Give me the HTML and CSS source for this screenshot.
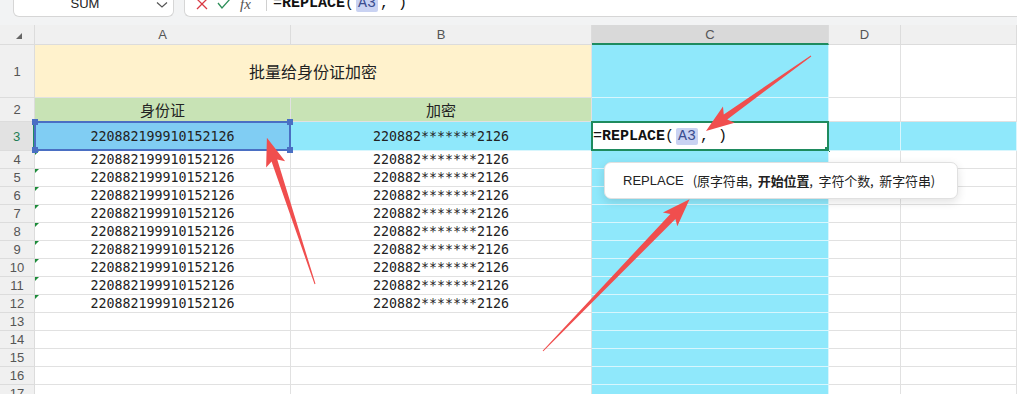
FILE: index.html
```html
<!DOCTYPE html>
<html lang="zh-CN">
<head>
    <meta charset="UTF-8">
    <title>批量给身份证加密</title>
    <link rel="stylesheet" href="styles.css">
</head>
<body>
    <div class="topbar">
        <div class="namebox">
            <span class="name">SUM</span>
            <svg class="chev" width="12" height="8" viewBox="0 0 12 8"><polyline points="1,1.5 6,6 11,1.5" fill="none" stroke="#555" stroke-width="1.2"/></svg>
        </div>
        <div class="fxbox">
            <svg class="ico" width="12" height="10" viewBox="0 0 12 10"><path d="M1,-1 L11,9 M11,-1 L1,9" stroke="#d93a44" stroke-width="1.3"/></svg>
            <svg class="ico" width="14" height="10" viewBox="0 0 14 10"><polyline points="1,3 5,8 13,-1" fill="none" stroke="#2f8f5a" stroke-width="1.3"/></svg>
            <i class="fx">fx</i>
            <span class="sep"></span>
            <span class="formula">=<b>REPLACE</b>(<span class="ref">A3</span>, )</span>
        </div>
    </div>

    <div class="sheet">
        <!-- 列头 -->
        <div class="c corner"></div>
        <div class="c ch">A</div>
        <div class="c ch">B</div>
        <div class="c ch on">C</div>
        <div class="c ch">D</div>
        <div class="c ch"></div>

        <div class="c rh">1</div>
        <div class="c title">批量给身份证加密</div>
        <div class="c cy"></div><div class="c"></div><div class="c"></div>

        <div class="c rh">2</div>
        <div class="c hd">身份证</div>
        <div class="c hd">加密</div>
        <div class="c cy"></div><div class="c"></div><div class="c"></div>

        <div class="c rh on">3</div>
        <div class="c num sel">220882199910152126
            <span class="hdl tl"></span><span class="hdl tr"></span><span class="hdl bl"></span><span class="hdl br"></span>
        </div>
        <div class="c num cy">220882*******2126</div>
        <div class="c edit"><span class="formula">=<b>REPLACE</b>(<span class="ref">A3</span>, )</span></div>
        <div class="c cy"></div><div class="c cy"></div>

        <div class="c rh">4</div><div class="c num err">220882199910152126</div><div class="c num">220882*******2126</div><div class="c cy"></div><div class="c"></div><div class="c"></div>
        <div class="c rh">5</div><div class="c num err">220882199910152126</div><div class="c num">220882*******2126</div><div class="c cy"></div><div class="c"></div><div class="c"></div>
        <div class="c rh">6</div><div class="c num err">220882199910152126</div><div class="c num">220882*******2126</div><div class="c cy"></div><div class="c"></div><div class="c"></div>
        <div class="c rh">7</div><div class="c num err">220882199910152126</div><div class="c num">220882*******2126</div><div class="c cy"></div><div class="c"></div><div class="c"></div>
        <div class="c rh">8</div><div class="c num err">220882199910152126</div><div class="c num">220882*******2126</div><div class="c cy"></div><div class="c"></div><div class="c"></div>
        <div class="c rh">9</div><div class="c num err">220882199910152126</div><div class="c num">220882*******2126</div><div class="c cy"></div><div class="c"></div><div class="c"></div>
        <div class="c rh">10</div><div class="c num err">220882199910152126</div><div class="c num">220882*******2126</div><div class="c cy"></div><div class="c"></div><div class="c"></div>
        <div class="c rh">11</div><div class="c num err">220882199910152126</div><div class="c num">220882*******2126</div><div class="c cy"></div><div class="c"></div><div class="c"></div>
        <div class="c rh">12</div><div class="c num err">220882199910152126</div><div class="c num">220882*******2126</div><div class="c cy"></div><div class="c"></div><div class="c"></div>
        <div class="c rh">13</div><div class="c"></div><div class="c"></div><div class="c cy"></div><div class="c"></div><div class="c"></div>
        <div class="c rh">14</div><div class="c"></div><div class="c"></div><div class="c cy"></div><div class="c"></div><div class="c"></div>
        <div class="c rh">15</div><div class="c"></div><div class="c"></div><div class="c cy"></div><div class="c"></div><div class="c"></div>
        <div class="c rh">16</div><div class="c"></div><div class="c"></div><div class="c cy"></div><div class="c"></div><div class="c"></div>
        <div class="c rh">17</div><div class="c"></div><div class="c"></div><div class="c cy"></div><div class="c"></div><div class="c"></div>
    </div>

    <!-- 函数提示 -->
    <div class="tip">
        <span class="fn">REPLACE</span><span class="args">(原字符串,&nbsp; <b>开始位置</b>,&nbsp; 字符个数,&nbsp; 新字符串)</span>
    </div>

    <!-- 红色箭头 -->
    <svg class="arrows" width="1017" height="394" viewBox="0 0 1017 394">
        <g transform="translate(315,284) rotate(-108.2)">
            <polygon points="0,-0.5 130,-3 126,-10 154,0 126,10 130,3 0,0.5"/>
        </g>
        <g transform="translate(811,56) rotate(144.5)">
            <polygon points="0,-0.5 105,-3 101,-10 129,0 101,10 105,3 0,0.5"/>
        </g>
        <g transform="translate(543,351) rotate(-46)">
            <polygon points="0,-0.5 187,-3.5 183,-10 211,0 183,10 187,3.5 0,0.5"/>
        </g>
    </svg>
</body>
</html>
```

FILE: styles.css
```css
body{
    margin:0;
    width:1017px;
    height:394px;
    overflow:hidden;
    background:#fff;
    font-family:"Liberation Sans","Noto Sans CJK SC",sans-serif;
    position:relative;
}

/* 顶部名称框和编辑栏 */
.topbar{
    height:25px;
    background:#f2f3f4;
    display:flex;
    align-items:flex-start;
    padding-left:13px;
    box-sizing:border-box;
}
.namebox{
    width:161px;
    height:17px;
    box-sizing:border-box;
    background:#fff;
    border:1px solid #d6d6d6;
    border-top:none;
    border-radius:0 0 6px 6px;
    display:flex;
    align-items:flex-start;
}
.name{
    flex:1;
    text-align:center;
    font-size:13px;
    line-height:10px;
    margin-top:-1px;
    color:#222;
}
.chev{margin:1px 5px 0 0}
.fxbox{
    flex:1;
    margin-left:10px;
    height:17px;
    box-sizing:border-box;
    background:#fff;
    border:1px solid #d6d6d6;
    border-top:none;
    border-right:none;
    border-radius:0 0 0 6px;
    display:flex;
    align-items:flex-start;
    padding-left:11px;
}
.ico{margin-right:9px}
.fx{
    font-family:"Liberation Serif",serif;
    font-size:15px;
    line-height:10px;
    color:#555;
    margin-top:-1px;
    width:20px;
}
.sep{
    width:1px;
    height:11px;
    background:#d0d0d0;
    margin:0 6px 0 6px;
}
.fxbox .formula{margin-top:-2px;line-height:12px}

.formula{
    font-family:"Liberation Mono",monospace;
    font-size:15px;
    color:#111;
    white-space:pre;
}
.formula b{font-weight:bold}
.ref{
    background:#c9d2f2;
    color:#3b4c8f;
    padding:0 2px;
    border-radius:2px;
    margin:0 2px;
}

/* 表格 */
.sheet{
    display:grid;
    grid-template-columns:35px 256px 301px 237px 72px 1fr;
    grid-template-rows:20px 53px 24px 29px repeat(14,18px);
}
.c{
    border-right:1px solid #e1e1e1;
    border-bottom:1px solid #e1e1e1;
    box-sizing:border-box;
    display:flex;
    align-items:center;
    justify-content:center;
    position:relative;
    color:#222;
}
.corner,.ch,.rh{
    background:#f0f0f0;
    border-color:#dcdcdc;
    font-size:13px;
    color:#555;
}
.corner::after{
    content:"";
    position:absolute;
    left:16px;
    top:8px;
    border-left:6px solid transparent;
    border-bottom:6px solid #666;
}
.ch.on{
    background:#d9d9d9;
    border-bottom:2px solid #1e8b5e;
}
.rh.on{
    background:#e2e2e2;
    color:#1e7d55;
    border-right:2px solid #1e8b5e;
}
.title{
    grid-column:span 2;
    background:#fff2cc;
    font-family:"Noto Sans CJK SC",sans-serif;
    font-size:16px;
}
.hd{
    background:#c8e3b5;
    font-family:"Noto Sans CJK SC",sans-serif;
    font-size:15px;
}
.cy{
    background:#8fe8fb;
    border-color:#d8f6fd;
}
.num{
    font-family:"DejaVu Sans Mono",monospace;
    font-size:13.3px;
}
.err::before{
    content:"";
    position:absolute;
    left:0;
    top:0;
    border-top:4px solid #1d8c3a;
    border-right:4px solid transparent;
}
.sel{background:#80cdf3}
.sel::after{
    content:"";
    position:absolute;
    left:-1px;
    top:-1px;
    right:-1px;
    bottom:-1px;
    border:2px solid #4a6fc3;
}
.hdl{
    position:absolute;
    width:6px;
    height:6px;
    background:#4a6fc3;
    z-index:2;
}
.tl{left:-3px;top:-3px}
.tr{right:-3px;top:-3px}
.bl{left:-3px;bottom:-3px}
.br{right:-3px;bottom:-3px}
.edit{
    background:#fff;
    border:2px solid #1e8b5e;
    margin:-1px 0 0 -1px;
    justify-content:flex-start;
    padding-left:0;
}
.edit::after{
    content:"";
    position:absolute;
    right:-3px;
    bottom:-3px;
    width:5px;
    height:5px;
    background:#1e8b5e;
}

/* 提示框 */
.tip{
    position:absolute;
    left:604px;
    top:162px;
    width:354px;
    height:37px;
    box-sizing:border-box;
    background:#fff;
    border:1px solid #e0e0e0;
    border-radius:7px;
    box-shadow:0 3px 10px rgba(0,0,0,.12);
    display:flex;
    align-items:center;
    padding-left:18px;
    font-size:13px;
    color:#222;
}
.args{
    margin-left:9px;
    font-family:"Noto Sans CJK SC",sans-serif;
    letter-spacing:-0.1px;
}
.args b{font-weight:bold}

.arrows{
    position:absolute;
    left:0;
    top:0;
    pointer-events:none;
}
.arrows polygon{fill:#f04e4e}
```
